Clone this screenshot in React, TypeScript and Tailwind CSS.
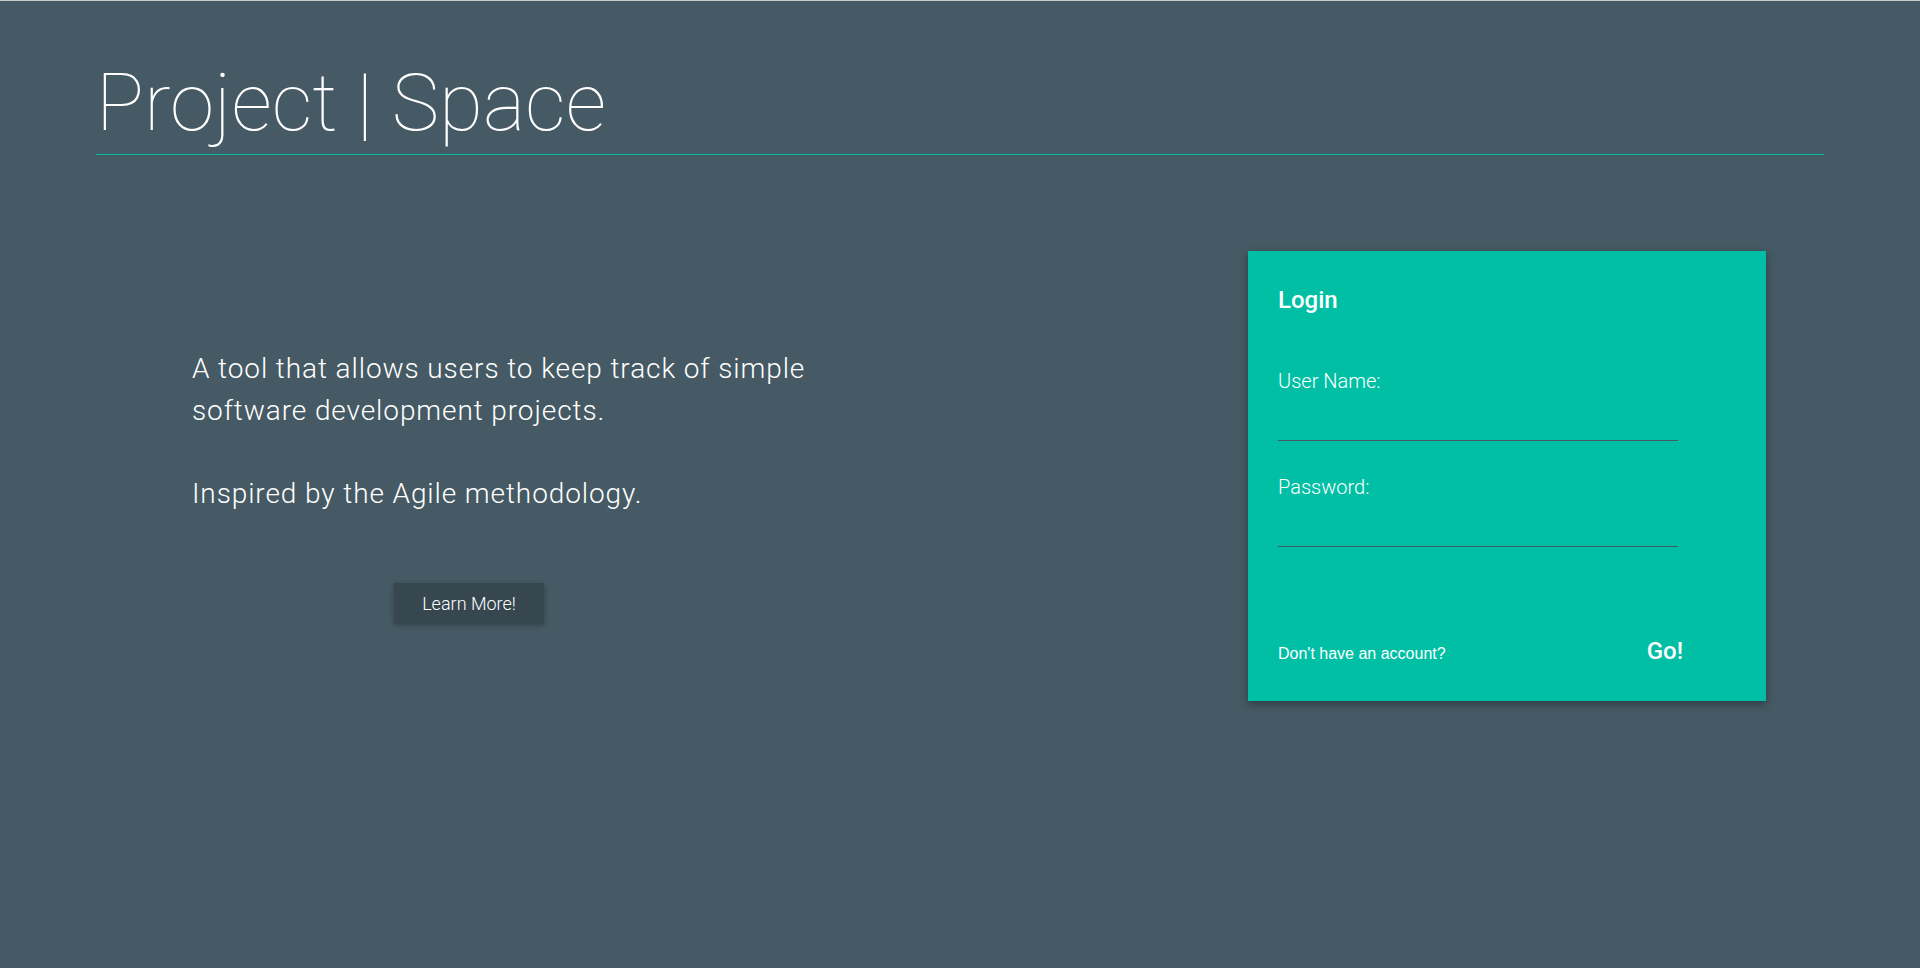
import React from 'react'

export default function App() {
  return (
    <div className="min-h-[968px] w-full bg-[#455a64] border-t border-[#c8c8c8] text-white font-['Roboto',sans-serif]">
      <div className="px-[96px]">
        {/* header */}
        <h1 className="pt-[62px] text-[80px] leading-none font-thin">Project | Space</h1>
        <div className="mt-[11px] h-px bg-[#00bfa5]" />

        <div className="mt-[96px] flex items-start">
          {/* intro */}
          <div className="pl-[96px] pt-[97px] w-[760px]">
            <p className="text-[28px] leading-[42px] font-light tracking-[0.9px] w-[660px]">
              A tool that allows users to keep track of simple software development projects.
            </p>
            <p className="mt-[41px] text-[28px] leading-[42px] font-light tracking-[0.9px]">Inspired by the Agile methodology.</p>
            <button className="mt-[68px] ml-[202px] w-[150px] h-[40px] bg-[#37474f] text-[18px] font-light shadow-[0_2px_5px_rgba(0,0,0,0.3)]">
              Learn More!
            </button>
          </div>

          {/* login card */}
          <div className="ml-auto mr-[58px] w-[518px] h-[450px] bg-[#00bfa5] shadow-[0_3px_8px_rgba(0,0,0,0.35)] pl-[30px] pt-[37px]">
            <h2 className="text-[24px] leading-none font-medium">Login</h2>
            <label className="block mt-[59px] text-[20px] leading-none font-light">User Name:</label>
            <input className="block mt-[10px] w-[400px] h-[40px] bg-transparent border-b border-[#455a64] outline-none" />
            <label className="block mt-[36px] text-[20px] leading-none font-light">Password:</label>
            <input type="password" className="block mt-[10px] w-[400px] h-[40px] bg-transparent border-b border-[#455a64] outline-none" />
            <div className="mt-[92px] flex items-baseline pr-[83px]">
              <span className="text-[16px] leading-none font-['Liberation_Sans',Arial,sans-serif]">Don't have an account?</span>
              <button className="ml-auto mb-[4px] text-[24px] leading-none font-medium">Go!</button>
            </div>
          </div>
        </div>
      </div>
    </div>
  )
}
